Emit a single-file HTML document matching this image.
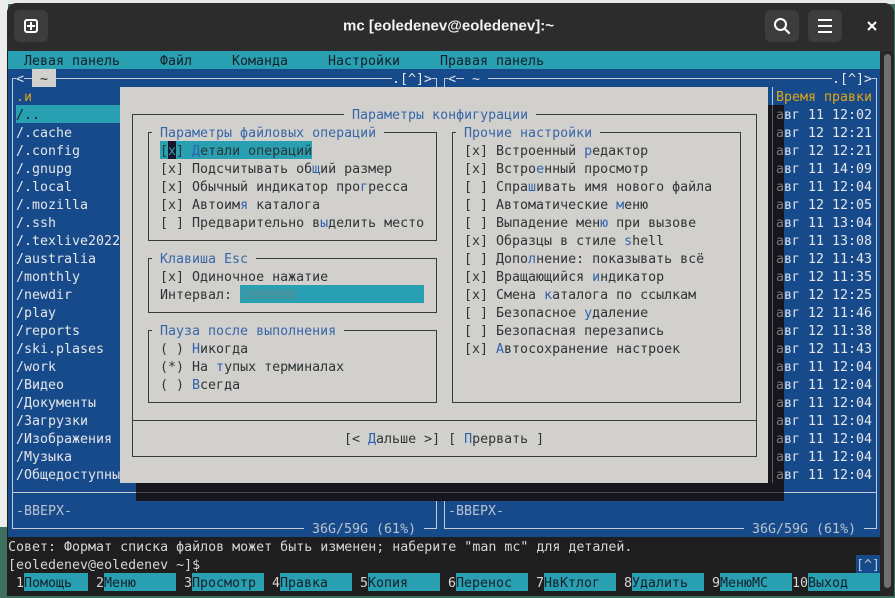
<!DOCTYPE html>
<html><head><meta charset="utf-8">
<style>
*{margin:0;padding:0;box-sizing:border-box}
html,body{width:895px;height:598px;overflow:hidden}
body{background:#3f6f5e;position:relative;font-family:"DejaVu Sans Mono","Liberation Mono",monospace}
.a{position:absolute}
.t{position:absolute;left:calc(8px + var(--c)*8px);top:calc(51px + var(--r)*18px);height:18px;line-height:18px;padding-top:2px;font-size:13.3px;white-space:pre}
.w{color:#e4e6ea}.y{color:#e0a516}.d{color:#2e3436}.h{color:#2f63ad}.tt{color:#3767a8}.g{color:#7a7a7a}.l{color:#d6d6d6}.k{color:#14202a}.m{color:#b9c3d0}
.bb{background:#174a8a}.db{background:#d1d0cc}
.fr{position:absolute;border:1px solid #3a3a3a}
.pf{position:absolute;border:1px solid #c3cad6}
</style></head><body>
<div class="a" style="left:0;top:0;width:895px;height:4px;background:#e9e9e9"></div>
<div class="a" style="left:0;top:0;width:8px;height:527px;background:#ececec"></div>
<div class="a" style="left:7px;top:3px;width:887px;height:593px;background:#1e1e1e;border-radius:10px 10px 0 0"></div>
<div class="a" style="left:7px;top:3px;width:887px;height:48px;background:#2c2c2c;border-radius:10px 10px 0 0"></div>
<div class="a" style="left:14px;top:10px;width:34px;height:32px;background:#3d3d3d;border-radius:6px"></div>
<div class="a" style="left:24px;top:19px;width:14px;height:14px;border:2px solid #fff;border-radius:3px"></div>
<div class="a" style="left:30px;top:22px;width:2px;height:8px;background:#fff"></div>
<div class="a" style="left:27px;top:25px;width:8px;height:2px;background:#fff"></div>
<div class="a" style="left:0;top:26px;width:895px;text-align:center;transform:translateY(-50%);font-family:'Liberation Sans',sans-serif;font-size:15px;font-weight:bold;color:#f2f2f2;padding-left:2px">mc [eoledenev@eoledenev]:~</div>
<div class="a" style="left:765px;top:10px;width:34px;height:32px;background:#3d3d3d;border-radius:6px"></div>
<svg class="a" style="left:772px;top:16px" width="20" height="20" viewBox="0 0 20 20"><circle cx="8.5" cy="8.5" r="5.5" fill="none" stroke="#fff" stroke-width="2"/><line x1="12.5" y1="12.5" x2="17" y2="17" stroke="#fff" stroke-width="2.2" stroke-linecap="round"/></svg>
<div class="a" style="left:808px;top:10px;width:34px;height:32px;background:#3d3d3d;border-radius:6px"></div>
<div class="a" style="left:818px;top:19px;width:14px;height:2px;background:#fff"></div>
<div class="a" style="left:818px;top:25px;width:14px;height:2px;background:#fff"></div>
<div class="a" style="left:818px;top:31px;width:14px;height:2px;background:#fff"></div>
<svg class="a" style="left:866px;top:20px" width="12" height="12" viewBox="0 0 12 12"><path d="M2 2L10 10M10 2L2 10" stroke="#fff" stroke-width="2"/></svg>
<div class="a" style="left:880px;top:51px;width:14px;height:545px;background:#262626"></div>
<div class="a" style="left:884px;top:54px;width:7px;height:534px;background:#707070;border-radius:4px"></div>

<div class="a" style="left:8px;top:51px;width:872px;height:18px;background:#29a0b1"></div>
<div class="a bb" style="left:8px;top:69px;width:872px;height:468px"></div>
<div class="a" style="left:16px;top:105px;width:104px;height:18px;background:#29a0b1"></div>
<div class="a bb" style="left:856px;top:555px;width:24px;height:18px"></div>
<div class="a" style="left:24px;top:573px;width:64px;height:18px;background:#29a0b1"></div>
<div class="a" style="left:104px;top:573px;width:72px;height:18px;background:#29a0b1"></div>
<div class="a" style="left:192px;top:573px;width:72px;height:18px;background:#29a0b1"></div>
<div class="a" style="left:280px;top:573px;width:72px;height:18px;background:#29a0b1"></div>
<div class="a" style="left:368px;top:573px;width:72px;height:18px;background:#29a0b1"></div>
<div class="a" style="left:456px;top:573px;width:72px;height:18px;background:#29a0b1"></div>
<div class="a" style="left:544px;top:573px;width:72px;height:18px;background:#29a0b1"></div>
<div class="a" style="left:632px;top:573px;width:72px;height:18px;background:#29a0b1"></div>
<div class="a" style="left:720px;top:573px;width:72px;height:18px;background:#29a0b1"></div>
<div class="a" style="left:808px;top:573px;width:72px;height:18px;background:#29a0b1"></div>

<div class="pf" style="left:12px;top:78px;width:425px;height:451px"></div>
<div class="a" style="left:12px;top:492px;width:425px;height:1px;background:#c3cad6"></div>
<div class="pf" style="left:444px;top:78px;width:433px;height:451px"></div>
<div class="a" style="left:444px;top:492px;width:433px;height:1px;background:#c3cad6"></div>
<div class="a" style="left:772px;top:87px;width:1px;height:18px;background:#c3cad6"></div>

<span class="t w bb" style="--c:1;--r:1">&lt;</span>
<span class="t k db" style="--c:3;--r:1"> ~ </span>
<span class="t w bb" style="--c:48;--r:1">.[^]&gt;</span>
<span class="t w bb" style="--c:55;--r:1">&lt;</span>
<span class="t w bb" style="--c:57;--r:1"> ~ </span>
<span class="t w bb" style="--c:103;--r:1">.[^]&gt;</span>
<span class="t y" style="--c:1;--r:2">.и</span>
<span class="t y" style="--c:96;--r:2">Время правки</span>
<span class="t k" style="--c:1;--r:3">/..</span>
<span class="t w" style="--c:1;--r:4">/.cache</span>
<span class="t w" style="--c:1;--r:5">/.config</span>
<span class="t w" style="--c:1;--r:6">/.gnupg</span>
<span class="t w" style="--c:1;--r:7">/.local</span>
<span class="t w" style="--c:1;--r:8">/.mozilla</span>
<span class="t w" style="--c:1;--r:9">/.ssh</span>
<span class="t w" style="--c:1;--r:10">/.texlive2022</span>
<span class="t w" style="--c:1;--r:11">/australia</span>
<span class="t w" style="--c:1;--r:12">/monthly</span>
<span class="t w" style="--c:1;--r:13">/newdir</span>
<span class="t w" style="--c:1;--r:14">/play</span>
<span class="t w" style="--c:1;--r:15">/reports</span>
<span class="t w" style="--c:1;--r:16">/ski.plases</span>
<span class="t w" style="--c:1;--r:17">/work</span>
<span class="t w" style="--c:1;--r:18">/Видео</span>
<span class="t w" style="--c:1;--r:19">/Документы</span>
<span class="t w" style="--c:1;--r:20">/Загрузки</span>
<span class="t w" style="--c:1;--r:21">/Изображения</span>
<span class="t w" style="--c:1;--r:22">/Музыка</span>
<span class="t w" style="--c:1;--r:23">/Общедоступны</span>
<span class="t w" style="--c:97;--r:3">вг 11 12:02</span>
<span class="t w" style="--c:97;--r:4">вг 12 12:21</span>
<span class="t w" style="--c:97;--r:5">вг 12 12:21</span>
<span class="t w" style="--c:97;--r:6">вг 11 14:09</span>
<span class="t w" style="--c:97;--r:7">вг 11 12:04</span>
<span class="t w" style="--c:97;--r:8">вг 12 12:05</span>
<span class="t w" style="--c:97;--r:9">вг 11 13:04</span>
<span class="t w" style="--c:97;--r:10">вг 11 13:08</span>
<span class="t w" style="--c:97;--r:11">вг 12 11:43</span>
<span class="t w" style="--c:97;--r:12">вг 12 11:35</span>
<span class="t w" style="--c:97;--r:13">вг 12 12:25</span>
<span class="t w" style="--c:97;--r:14">вг 12 11:46</span>
<span class="t w" style="--c:97;--r:15">вг 12 11:38</span>
<span class="t w" style="--c:97;--r:16">вг 12 11:43</span>
<span class="t w" style="--c:97;--r:17">вг 11 12:04</span>
<span class="t w" style="--c:97;--r:18">вг 11 12:04</span>
<span class="t w" style="--c:97;--r:19">вг 11 12:04</span>
<span class="t w" style="--c:97;--r:20">вг 11 12:04</span>
<span class="t w" style="--c:97;--r:21">вг 11 12:04</span>
<span class="t w" style="--c:97;--r:22">вг 11 12:04</span>
<span class="t w" style="--c:97;--r:23">вг 11 12:04</span>
<span class="t m" style="--c:1;--r:25">-ВВЕРХ-</span>
<span class="t m" style="--c:55;--r:25">-ВВЕРХ-</span>
<span class="t m bb" style="--c:37;--r:26"> 36G/59G (61%) </span>
<span class="t m bb" style="--c:92;--r:26"> 36G/59G (61%) </span>
<span class="t l" style="--c:0;--r:27">Совет: Формат списка файлов может быть изменен; наберите "man mc" для деталей.</span>
<span class="t l" style="--c:0;--r:28">[eoledenev@eoledenev ~]$</span>
<span class="t m" style="--c:106;--r:28">[^]</span>
<span class="t k" style="--c:2;--r:0">Левая панель</span>
<span class="t k" style="--c:19;--r:0">Файл</span>
<span class="t k" style="--c:28;--r:0">Команда</span>
<span class="t k" style="--c:40;--r:0">Настройки</span>
<span class="t k" style="--c:54;--r:0">Правая панель</span>
<span class="t l" style="--c:1;--r:29">1</span><span class="t k" style="--c:2;--r:29">Помощь</span>
<span class="t l" style="--c:11;--r:29">2</span><span class="t k" style="--c:12;--r:29">Меню</span>
<span class="t l" style="--c:22;--r:29">3</span><span class="t k" style="--c:23;--r:29">Просмотр</span>
<span class="t l" style="--c:33;--r:29">4</span><span class="t k" style="--c:34;--r:29">Правка</span>
<span class="t l" style="--c:44;--r:29">5</span><span class="t k" style="--c:45;--r:29">Копия</span>
<span class="t l" style="--c:55;--r:29">6</span><span class="t k" style="--c:56;--r:29">Перенос</span>
<span class="t l" style="--c:66;--r:29">7</span><span class="t k" style="--c:67;--r:29">НвКтлог</span>
<span class="t l" style="--c:77;--r:29">8</span><span class="t k" style="--c:78;--r:29">Удалить</span>
<span class="t l" style="--c:88;--r:29">9</span><span class="t k" style="--c:89;--r:29">МенюMC</span>
<span class="t l" style="--c:98;--r:29">10</span><span class="t k" style="--c:100;--r:29">Выход</span>

<div class="a db" style="left:120px;top:87px;width:648px;height:396px"></div>
<div class="fr" style="left:132px;top:114px;width:625px;height:343px"></div>
<div class="a" style="left:132px;top:420px;width:625px;height:1px;background:#3a3a3a"></div>
<div class="fr" style="left:148px;top:132px;width:289px;height:109px"></div>
<div class="fr" style="left:148px;top:258px;width:289px;height:55px"></div>
<div class="fr" style="left:148px;top:330px;width:289px;height:73px"></div>
<div class="fr" style="left:452px;top:132px;width:289px;height:271px"></div>
<div class="a" style="left:160px;top:141px;width:152px;height:18px;background:#29a0b1"></div>
<div class="a" style="left:168px;top:141px;width:8px;height:18px;background:#17162a"></div>
<div class="a" style="left:240px;top:285px;width:184px;height:18px;background:#29a0b1"></div>

<span class="t tt db" style="--c:42;--r:3"> Параметры конфигурации </span>
<span class="t tt db" style="--c:18;--r:4"> Параметры файловых операций </span>
<span class="t tt db" style="--c:56;--r:4"> Прочие настройки </span>
<span class="t d" style="--c:19;--r:5">[<span style="color:#29a0b1">x</span>] <span class="h">Д</span>етали операций</span>
<span class="t d" style="--c:19;--r:6">[x] Подсчитывать об<span class="h">щ</span>ий размер</span>
<span class="t d" style="--c:19;--r:7">[x] Обычный индикатор про<span class="h">г</span>ресса</span>
<span class="t d" style="--c:19;--r:8">[x] Автоим<span class="h">я</span> каталога</span>
<span class="t d" style="--c:19;--r:9">[ ] Предварительно в<span class="h">ы</span>делить место</span>
<span class="t tt db" style="--c:18;--r:11"> Клавиша Esc </span>
<span class="t d" style="--c:19;--r:12">[x] Одиночное нажатие</span>
<span class="t d" style="--c:19;--r:13">Интервал: </span>
<span class="t" style="--c:29;--r:13;color:#66858b">1000000</span>
<span class="t tt db" style="--c:18;--r:15"> Пауза после выполнения </span>
<span class="t d" style="--c:19;--r:16">( ) <span class="h">Н</span>икогда</span>
<span class="t d" style="--c:19;--r:17">(*) На <span class="h">т</span>упых терминалах</span>
<span class="t d" style="--c:19;--r:18">( ) <span class="h">В</span>сегда</span>
<span class="t d" style="--c:57;--r:5">[x] Встроенный <span class="h">р</span>едактор</span>
<span class="t d" style="--c:57;--r:6">[x] Встро<span class="h">е</span>нный просмотр</span>
<span class="t d" style="--c:57;--r:7">[ ] Спра<span class="h">ш</span>ивать имя нового файла</span>
<span class="t d" style="--c:57;--r:8">[ ] Автоматические <span class="h">м</span>еню</span>
<span class="t d" style="--c:57;--r:9">[ ] Выпадение мен<span class="h">ю</span> при вызове</span>
<span class="t d" style="--c:57;--r:10">[x] Образцы в стиле <span class="h">s</span>hell</span>
<span class="t d" style="--c:57;--r:11">[ ] Допо<span class="h">л</span>нение: показывать всё</span>
<span class="t d" style="--c:57;--r:12">[x] Вращающийся <span class="h">и</span>ндикатор</span>
<span class="t d" style="--c:57;--r:13">[x] Смена <span class="h">к</span>аталога по ссылкам</span>
<span class="t d" style="--c:57;--r:14">[ ] Безопасное <span class="h">у</span>даление</span>
<span class="t d" style="--c:57;--r:15">[ ] Безопасная перезапись</span>
<span class="t d" style="--c:57;--r:16">[x] <span class="h">А</span>втосохранение настроек</span>
<span class="t d" style="--c:42;--r:21">[&lt; <span class="h">Д</span>альше &gt;] [ <span class="h">П</span>рервать ]</span>

<div class="a" style="left:768px;top:105px;width:16px;height:396px;background:#17161e"></div>
<div class="a" style="left:136px;top:483px;width:648px;height:18px;background:#17161e"></div>
<div class="a" style="left:772px;top:105px;width:1px;height:378px;background:#5a5a5a"></div>
<div class="a" style="left:136px;top:492px;width:648px;height:1px;background:#4a4a4a"></div>
<span class="t g" style="--c:96;--r:3">а</span>
<span class="t g" style="--c:96;--r:4">а</span>
<span class="t g" style="--c:96;--r:5">а</span>
<span class="t g" style="--c:96;--r:6">а</span>
<span class="t g" style="--c:96;--r:7">а</span>
<span class="t g" style="--c:96;--r:8">а</span>
<span class="t g" style="--c:96;--r:9">а</span>
<span class="t g" style="--c:96;--r:10">а</span>
<span class="t g" style="--c:96;--r:11">а</span>
<span class="t g" style="--c:96;--r:12">а</span>
<span class="t g" style="--c:96;--r:13">а</span>
<span class="t g" style="--c:96;--r:14">а</span>
<span class="t g" style="--c:96;--r:15">а</span>
<span class="t g" style="--c:96;--r:16">а</span>
<span class="t g" style="--c:96;--r:17">а</span>
<span class="t g" style="--c:96;--r:18">а</span>
<span class="t g" style="--c:96;--r:19">а</span>
<span class="t g" style="--c:96;--r:20">а</span>
<span class="t g" style="--c:96;--r:21">а</span>
<span class="t g" style="--c:96;--r:22">а</span>
<span class="t g" style="--c:96;--r:23">а</span>
</body></html>
